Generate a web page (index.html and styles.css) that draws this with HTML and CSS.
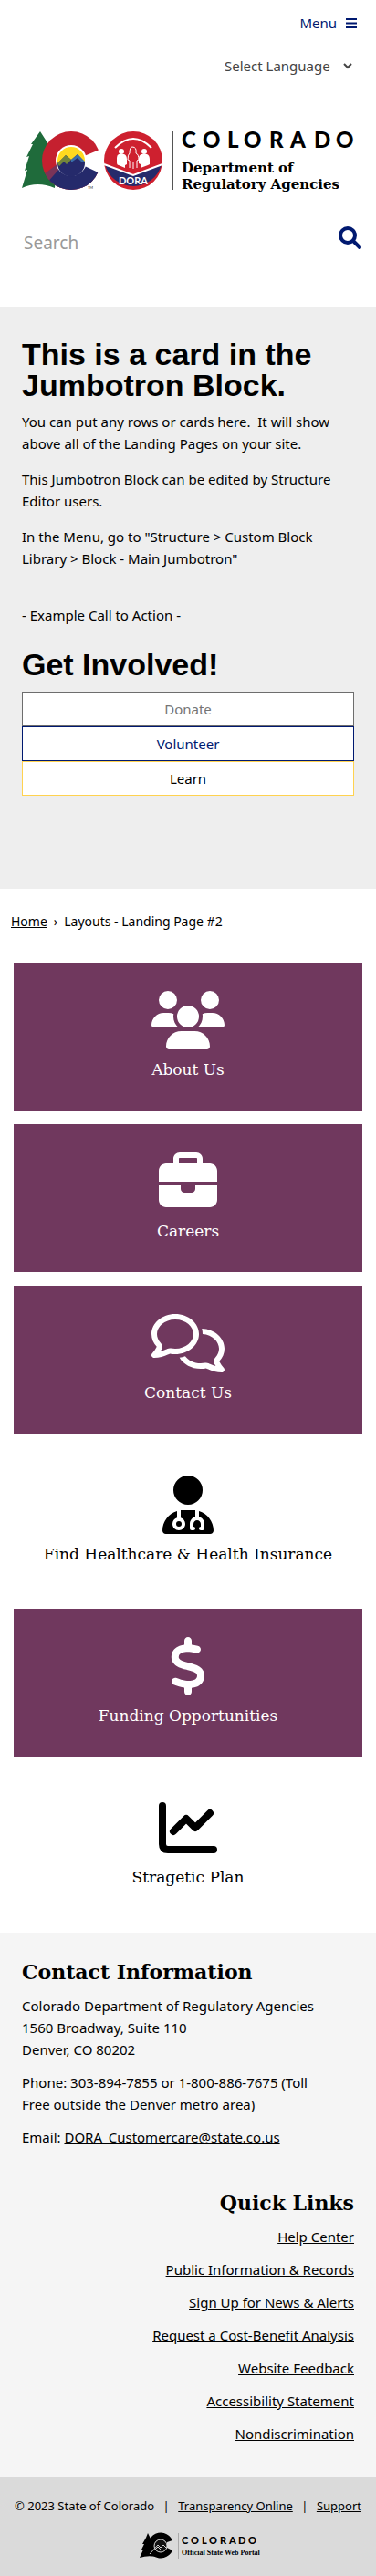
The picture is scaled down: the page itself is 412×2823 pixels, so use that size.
FILE: index.html
```html
<!DOCTYPE html>
<html lang="en">
<head>
<meta charset="utf-8">
<meta name="viewport" content="width=device-width, initial-scale=1">
<title>Layouts - Landing Page #2</title>
<link rel="stylesheet" href="styles.css">
</head>
<body>
<header class="header">
  <button class="menu" type="button">Menu
    <svg width="12" height="11" viewBox="0 0 12 11" aria-hidden="true"><path d="M0 1h12M0 5.500h12M0 10h12" stroke="currentColor" stroke-width="2"/></svg>
  </button>
  <div class="language">
    <select class="language-select" aria-label="Select Language"><option>Select Language</option></select>
    <svg class="chevron" width="10" height="6" viewBox="0 0 10 6" aria-hidden="true"><path d="M1 1l4 4 4-4" fill="none" stroke="currentColor" stroke-width="2"/></svg>
  </div>
  <a class="brand" href="#" aria-label="Colorado Department of Regulatory Agencies">
    <svg viewBox="0 0 364 70">
      <defs><clipPath id="c-disc"><circle cx="54" cy="32" r="32"/></clipPath></defs>
      <path d="M20 0L29 14 38 30 36 62Q17 54 0 62L6 42 3 43 8 27 5 28 12 14 10 14z" fill="#1f6b3b"/>
      <g clip-path="url(#c-disc)">
        <path d="M20 0h68v64H20z" fill="#c5202f"/>
        <path d="M20 50L40 35 54 32 90 32V64H20z" fill="#7a3458"/>
        <path d="M26 58L42 40 54 32 90 32V66H26z" fill="#252a6b"/>
      </g>
      <path d="M56 32L90 18V48z" fill="#fff"/>
      <circle cx="54" cy="32" r="16" fill="#ffd91f" stroke="#fff" stroke-width="2"/>
      <path d="M39 35l9-9 6 5 7-6 8 9A15 15 0 0 1 39 35z" fill="#252a6b"/>
      <path d="M39 35l9-9 6 5-5 5-3-3-5 5z" fill="#73863b"/>
      <path d="M54 31l7-6 8 8-3 1-5-5-7 5z" fill="#3a6ea8"/>
      <text x="72" y="63" font-size="4" fill="#222" class="logo-sans">TM</text>
      <circle cx="122" cy="32" r="32" fill="#ce202f"/>
      <path d="M91 36l31 12 31-12A32 32 0 0 1 91 36z" fill="#252a6b"/>
      <path d="M90 36l32 12 32-12" fill="none" stroke="#fff" stroke-width="2"/>
      <path d="M102 18q20-20 40 0" fill="none" stroke="#fff" stroke-width="2"/>
      <circle cx="109" cy="22" r="3" fill="#fff"/><circle cx="134" cy="22" r="3" fill="#fff"/>
      <path d="M106 25h6q3 1 3 6v5l-2 1v3l-7-3q-2 0-2-3v-5q0-3 2-4zM131 25h6q3 1 3 6v5l-2 1-8 3v-4l-2-1v-5q0-4 3-5z" fill="#fff"/>
      <path d="M118 40v-8l-2-1q0-6 2-7 0-7 3-7 5 0 4 7 3 1 3 7l-2 1v8M122 33v8" fill="#ce202f" stroke="#fff"/>
      <text x="106" y="58" font-size="11" font-weight="700" fill="#fff" class="logo-sans">DORA</text>
      <path d="M165.500 0v64" stroke="#555"/>
      <text x="175 198 225 243 271 294 320 344" y="18" font-size="24" font-weight="900" class="logo-sans">COLORADO</text>
      <text x="175" y="45" font-size="15" font-weight="700" class="logo-slab">Department of</text>
      <text x="175" y="63" font-size="15" font-weight="700" class="logo-slab">Regulatory Agencies</text>
    </svg>
  </a>
  <form class="search">
    <input class="search-input" type="search" placeholder="Search" aria-label="Search">
    <button class="search-button" type="button" aria-label="Search">
      <svg width="25" height="25" viewBox="0 0 25 25"><circle cx="10" cy="10" r="8" fill="none" stroke="currentColor" stroke-width="4"/><path d="M16 16l7 7" stroke="currentColor" stroke-width="4" stroke-linecap="round"/></svg>
    </button>
  </form>
</header>
<main>
  <section class="jumbotron">
    <h1 class="title">This is a card in the Jumbotron Block.</h1>
    <p>You can put any rows or cards here.&nbsp; It will show above all of the Landing Pages on your site.</p>
    <p>This Jumbotron Block can be edited by Structure Editor users.</p>
    <p>In the Menu, go to "Structure &gt; Custom Block Library &gt; Block - Main Jumbotron"</p>
    <p class="example">- Example Call to Action -</p>
    <h2 class="title">Get Involved!</h2>
    <div class="actions">
      <a class="action action-gray" href="#">Donate</a>
      <a class="action action-blue" href="#">Volunteer</a>
      <a class="action action-gold" href="#">Learn</a>
    </div>
  </section>
  <nav class="breadcrumb" aria-label="Breadcrumb"><a href="#">Home</a><span>›</span><span>Layouts - Landing Page #2</span></nav>
  <div class="tiles">
    <a class="tile tile-plum" href="#">
      <svg class="icon" viewBox="0 0 640 512"><path d="M144 0a80 80 0 1 1 0 160A80 80 0 1 1 144 0zM512 0a80 80 0 1 1 0 160A80 80 0 1 1 512 0zM0 298.700C0 310.400 9.600 320 21.300 320H235.400c-26.600-23.500-43.300-57.800-43.300-96c0-7.600.7-15 1.900-22.300c-13.600-6.300-28.700-9.700-44.600-9.700H106.700C47.800 192 0 239.800 0 298.700zM404.700 320H618.700c11.800 0 21.300-9.600 21.300-21.300C640 239.800 592.200 192 533.300 192H490.700c-15.900 0-31 3.500-44.600 9.700c1.300 7.200 1.900 14.700 1.900 22.300c0 38.200-16.800 72.500-43.300 96zM224 224a96 96 0 1 1 192 0 96 96 0 1 1-192 0zM128 485.300c0 14.700 11.900 26.700 26.700 26.700H485.300c14.700 0 26.700-11.900 26.700-26.700C512 411.700 452.300 352 378.700 352H261.300C187.700 352 128 411.700 128 485.300z"/></svg>
      <span>About Us</span>
    </a>
    <a class="tile tile-plum" href="#">
      <svg class="icon" viewBox="0 0 512 512"><path d="M184 48H328c4.400 0 8 3.600 8 8V96H176V56c0-4.400 3.600-8 8-8zm-56 8V96H64C28.700 96 0 124.700 0 160v96H512V160c0-35.300-28.700-64-64-64H384V56c0-30.900-25.100-56-56-56H184c-30.900 0-56 25.100-56 56zM512 288H320v32c0 17.700-14.300 32-32 32H224c-17.700 0-32-14.300-32-32V288H0V416c0 35.300 28.700 64 64 64H448c35.300 0 64-28.700 64-64V288z"/></svg>
      <span>Careers</span>
    </a>
    <a class="tile tile-plum" href="#">
      <svg class="icon" viewBox="0 0 640 512"><path d="M88.200 309.100c9.800-18.300 6.800-40.800-7.500-55.800C59.400 230.900 48 204 48 176c0-63.500 63.800-128 160-128s160 64.500 160 128s-63.800 128-160 128c-13.100 0-25.800-1.300-37.800-3.600c-10.400-2-21.200-.6-30.700 4.200c-4.100 2.100-8.300 4.100-12.600 6c-16 7.200-32.900 13.500-49.900 18c2.800-4.600 5.400-9.100 7.900-13.600c1.100-1.900 2.200-3.900 3.200-5.900zM208 352c114.900 0 208-78.800 208-176S322.900 0 208 0S0 78.800 0 176c0 41.800 17.200 80.100 45.900 110.300c-.9 1.700-1.900 3.500-2.800 5.100c-10.300 18.400-22.300 36.500-36.600 52.100c-6.600 7-8.300 17.200-4.600 25.900C5.800 378.300 14.400 384 24 384c43 0 86.500-13.300 122.700-29.700c4.800-2.200 9.600-4.500 14.200-6.800c15.100 3 30.900 4.500 47.100 4.500zM432 480c16.200 0 31.900-1.600 47.100-4.500c4.600 2.300 9.400 4.600 14.200 6.800C529.500 498.700 573 512 616 512c9.600 0 18.200-5.700 22-14.500c3.800-8.800 2-19-4.600-25.900c-14.200-15.600-26.200-33.700-36.600-52.100c-.9-1.700-1.900-3.400-2.800-5.100C622.800 384.100 640 345.800 640 304c0-94.400-87.900-171.500-198.200-175.800c4.100 15.200 6.200 31.200 6.200 47.800l0 .6c87.200 6.700 144 67.500 144 127.400c0 28-11.400 54.900-32.700 77.200c-14.300 15-17.300 37.600-7.500 55.800c1.100 2 2.200 4 3.200 5.900c2.500 4.500 5.200 9 7.900 13.600c-17-4.500-33.900-10.700-49.900-18c-4.300-1.900-8.500-3.900-12.600-6c-9.500-4.800-20.300-6.200-30.700-4.200c-12.100 2.400-24.800 3.600-37.800 3.600c-61.700 0-110-26.500-136.800-62.300c-16 5.400-32.800 9.400-50 11.800C279 439.800 350 480 432 480z"/></svg>
      <span>Contact Us</span>
    </a>
    <a class="tile" href="#">
      <svg class="icon" viewBox="0 0 448 512"><path d="M224 256a128 128 0 1 0 0-256 128 128 0 1 0 0 256zm-96 55.200C54 332.900 0 401.300 0 482.300C0 498.700 13.300 512 29.700 512H418.300c16.400 0 29.700-13.300 29.700-29.700c0-81-54-149.400-128-171.100V362c27.600 7.100 48 32.200 48 62v40c0 8.800-7.200 16-16 16H336c-8.800 0-16-7.200-16-16s7.200-16 16-16V424c0-17.700-14.300-32-32-32s-32 14.300-32 32v24c8.800 0 16 7.200 16 16s-7.200 16-16 16H256c-8.800 0-16-7.200-16-16V424c0-29.800 20.400-54.900 48-62V304.900c-6-.6-12.100-.9-18.300-.9H178.300c-6.200 0-12.300.3-18.300.9v65.400c23.100 6.900 40 28.300 40 53.700c0 30.900-25.100 56-56 56s-56-25.100-56-56c0-25.400 16.900-46.800 40-53.700V311.200zM144 448a24 24 0 1 0 0-48 24 24 0 1 0 0 48z"/></svg>
      <span>Find Healthcare &amp; Health Insurance</span>
    </a>
    <a class="tile tile-plum" href="#">
      <svg class="icon" viewBox="0 0 320 512"><path d="M160 0c17.700 0 32 14.300 32 32V67.700c1.600.2 3.100.4 4.700.7c.4.1.7.1 1.100.2l48 8.800c17.400 3.200 28.900 19.900 25.700 37.200s-19.900 28.900-37.200 25.700l-47.500-8.700c-31.300-4.600-58.900-1.500-78.300 6.200s-27.200 18.300-29 28.100c-2 10.700-.5 16.700 1.200 20.400c1.800 3.900 5.500 8.300 12.800 13.200c16.300 10.700 41.300 17.700 73.700 26.300l2.900.8c28.600 7.600 63.600 16.800 89.600 33.800c14.200 9.300 27.600 21.900 35.900 39.500c8.500 17.900 10.300 37.900 6.400 59.200c-6.900 38-33.100 63.400-65.600 76.700c-13.700 5.600-28.600 9.200-44.400 11V480c0 17.700-14.300 32-32 32s-32-14.300-32-32V445.100c-.4-.1-.9-.1-1.300-.2l-.2 0c-24.400-3.800-64.500-14.300-91.500-26.300c-16.100-7.200-23.400-26.100-16.200-42.200s26.100-23.400 42.200-16.200c20.900 9.300 55.300 18.500 75.200 21.600c31.900 4.700 58.200 2 76-5.300c16.900-6.900 24.600-16.900 26.800-28.900c1.900-10.600.4-16.700-1.300-20.400c-1.900-4-5.600-8.400-13-13.300c-16.400-10.700-41.500-17.700-74-26.300l-2.800-.7C119.400 279.300 84.400 270 58.400 253c-14.200-9.300-27.500-22-35.800-39.600c-8.400-17.900-10.100-37.900-6.100-59.200C23.700 116 52.300 91.200 84.800 78.300c13.300-5.300 27.900-8.900 43.200-11V32c0-17.700 14.300-32 32-32z"/></svg>
      <span>Funding Opportunities</span>
    </a>
    <a class="tile" href="#">
      <svg class="icon" viewBox="0 0 512 512"><path d="M32 64V400q0 48 48 48H480M128 288L240 176L320 256L448 128" fill="none" stroke="currentColor" stroke-width="64" stroke-linecap="round" stroke-linejoin="round"/></svg>
      <span>Stragetic Plan</span>
    </a>
  </div>
</main>
<footer>
  <div class="info">
    <section class="contact">
      <h2 class="info-title">Contact Information</h2>
      <p>Colorado Department of Regulatory Agencies<br>1560 Broadway, Suite 110<br>Denver, CO 80202</p>
      <p>Phone: 303-894-7855 or 1-800-886-7675 (Toll Free outside the Denver metro area)</p>
      <p>Email: <a href="#">DORA_Customercare@state.co.us</a></p>
    </section>
    <section class="links">
      <h2 class="info-title">Quick Links</h2>
      <ul>
        <li><a href="#">Help Center</a></li>
        <li><a href="#">Public Information &amp; Records</a></li>
        <li><a href="#">Sign Up for News &amp; Alerts</a></li>
        <li><a href="#">Request a Cost-Benefit Analysis</a></li>
        <li><a href="#">Website Feedback</a></li>
        <li><a href="#">Accessibility Statement</a></li>
        <li><a href="#">Nondiscrimination</a></li>
      </ul>
    </section>
  </div>
  <div class="legal">
    <div class="legal-row"><span>© 2023 State of Colorado</span><span>|</span><a href="#">Transparency Online</a><span>|</span><a href="#">Support</a></div>
    <a class="portal" href="#" aria-label="Colorado Official State Web Portal">
      <svg width="140" height="30" viewBox="0 0 140 30">
        <path d="M9 1l3 6 4-3-3 18 5 5Q9 25 0 28l4-9H2l3-6H3l4-7z"/>
        <path d="M36 9A14 14 0 1 0 36 20L30 17 30 11z"/>
        <circle cx="23" cy="15" r="7" fill="#111" stroke="#ddd" stroke-width="1"/>
        <path d="M11 24l9-10 3 3 3-3 4 4M17 19l3-3 5 5" fill="none" stroke="#ccc"/>
        <path d="M42.500 1v28" stroke="#aaa"/>
        <text x="46 56 68 76 88 98 108 119" y="13" font-size="11" font-weight="900" class="logo-sans">COLORADO</text>
        <text x="46" y="25" font-size="8" font-weight="700" class="portal-text">Official State Web Portal</text>
      </svg>
    </a>
  </div>
</footer>
</body>
</html>
```
FILE: styles.css
```css
* { box-sizing: border-box; }
body {
  margin: 0;
  background: #fff;
  color: #000;
  font: 15px/24px "Noto Sans", "Open Sans", sans-serif;
}
a { color: inherit; }
p { margin: 0 0 15px; }
svg { display: block; overflow: visible; }
button { border: 0; padding: 0; background: none; font: inherit; cursor: pointer; }
.logo-sans { font-family: Lato, sans-serif; }
.logo-slab { font-family: "DejaVu Serif", serif; }
.portal-text { font-family: "Liberation Serif", serif; }

.header {
  display: flex;
  flex-direction: column;
  align-items: flex-end;
  min-height: 336px;
  padding: 13px 16px 0 24px;
}
.menu { display: flex; align-items: center; gap: 10px; margin-right: 5px; color: #001970; }
.language { display: flex; align-items: center; gap: 14px; margin: 23px 10px 0 0; color: #444; }
.language-select { appearance: none; border: 0; padding: 0; background: none; color: inherit; font: inherit; }
.brand { align-self: stretch; margin: 60px 8px 0 0; color: #000; }
.search { display: flex; align-items: flex-start; align-self: stretch; margin-top: 34px; }
.search-input {
  flex: 1;
  min-width: 0;
  height: 36px;
  border: 0;
  padding: 0 2px;
  background: none;
  font: inherit;
  font-size: 19px;
  outline: 0;
}
.search-input::placeholder { color: #999; }
.search-button { color: #001970; }

.jumbotron { padding: 35px 24px 102px; background: #eee; }
.title { margin: 0; font: bold 34px/34px "Liberation Sans", Arial, sans-serif; }
.jumbotron h1 { margin-bottom: 11px; }
.example { margin: 38px 0 25px; }
.actions { display: flex; flex-direction: column; margin-top: 13px; }
.action {
  border: 1px solid;
  padding: 6px;
  background: #fff;
  text-align: center;
  text-decoration: none;
}
.action-gray { border-color: #6d6d6d; color: #757575; }
.action-blue { border-color: #001970; color: #001970; }
.action-gold { border-color: #ffd24f; color: #000; }

.breadcrumb { display: flex; gap: 7px; padding: 24px 12px 33px; font-size: 14px; }
.tiles { display: flex; flex-direction: column; gap: 15px; padding: 0 15px 16px; }
.tile {
  display: flex;
  flex-direction: column;
  align-items: center;
  gap: 10px;
  min-height: 162px;
  padding: 31px 8px;
  font: 17px/24px "DejaVu Serif", serif;
  text-decoration: none;
}
.tile-plum { background: #70385e; color: #fff; }
.icon { height: 64px; fill: currentColor; }

.info { padding: 31px 24px 24px; background: #f5f5f5; }
.contact { padding-right: 32px; }
.info p { margin-bottom: 12px; }
.info-title { margin: 0 0 13px; font: bold 22px/24px "DejaVu Serif", serif; }
.links { margin-top: 48px; text-align: right; }
.links ul { margin: 0; padding: 0; list-style: none; }
.links li { margin-bottom: 12px; }
.legal { padding: 19px 16px 18px; background: #dadada; }
.legal-row { display: flex; justify-content: space-between; font-size: 13px; white-space: nowrap; }
.portal { display: block; width: 140px; margin: 17px auto 0; padding-left: 34px; box-sizing: content-box; color: #000; }
```
